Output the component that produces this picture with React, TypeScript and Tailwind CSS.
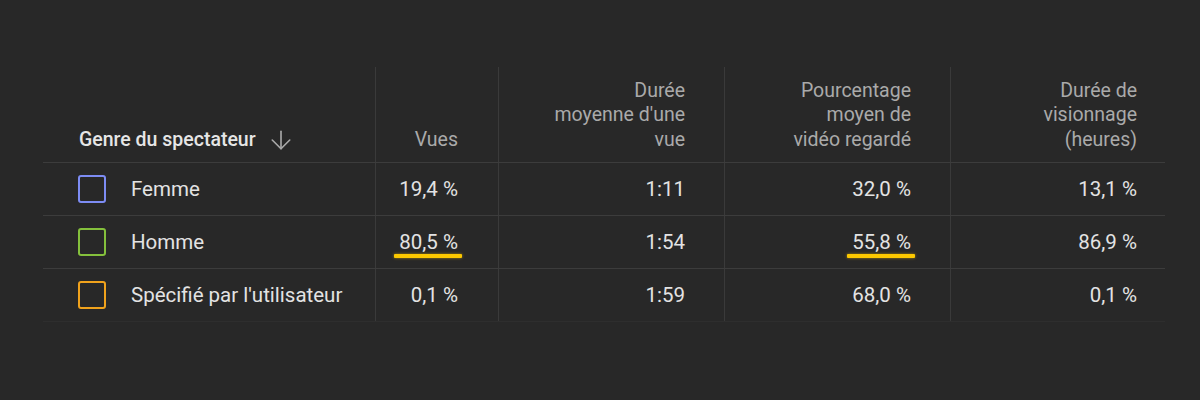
import React from 'react';
import { ArrowDown } from 'lucide-react';

type Row = {
  label: string;
  color: string;
  views: string;
  avgDuration: string;
  avgPercent: string;
  watchTime: string;
  markViews?: boolean;
  markPercent?: boolean;
};

const rows: Row[] = [
  { label: 'Femme', color: 'border-[#7d8cf4]', views: '19,4 %', avgDuration: '1:11', avgPercent: '32,0 %', watchTime: '13,1 %' },
  { label: 'Homme', color: 'border-[#84c03c]', views: '80,5 %', avgDuration: '1:54', avgPercent: '55,8 %', watchTime: '86,9 %', markViews: true, markPercent: true },
  { label: "Spécifié par l'utilisateur", color: 'border-[#f0a21c]', views: '0,1 %', avgDuration: '1:59', avgPercent: '68,0 %', watchTime: '0,1 %' },
];

const cols = 'grid grid-cols-[333px_123px_226px_226px_214px]';

function Marked({ text, on }: { text: string; on?: boolean }) {
  if (!on) return <span>{text}</span>;
  return (
    <span className="relative">
      {text}
      <span className="absolute left-[-5px] right-[-4px] top-[27px] h-[4.5px] rounded-[1px] bg-[#fcc800] shadow-[0_0_3px_rgba(252,200,0,0.6)]" />
    </span>
  );
}

export default function App() {
  return (
    <div
      className="w-[1200px] h-[400px] bg-[#282828] pt-[67px] pl-[43px]"
      style={{ fontFamily: 'Roboto, "Liberation Sans", sans-serif' }}
    >
      <div className="w-[1122px]">
        {/* Header */}
        <div className={`${cols} h-[96px] border-b border-[#3c3c3c] text-[19.5px] leading-[24.5px] text-[#aaaaaa]`}>
          <div className="flex items-end pl-[36px] pb-[10px] border-r border-[#3a3a3a]">
            <div className="flex items-center">
              <span className="font-medium text-[#e6e6e6]">Genre du spectateur</span>
              <ArrowDown className="ml-[10px] w-[30px] h-[30px] -my-[3px] text-[#aaaaaa]" strokeWidth={1.3} />
            </div>
          </div>
          <div className="flex items-end justify-end text-right pr-[40px] pb-[10px] border-r border-[#3a3a3a]">
            Vues
          </div>
          <div className="flex items-end justify-end text-right pr-[39px] pb-[10px] border-r border-[#3a3a3a]">
            <span>Durée<br />moyenne d'une<br />vue</span>
          </div>
          <div className="flex items-end justify-end text-right pr-[39px] pb-[10px] border-r border-[#3a3a3a]">
            <span>Pourcentage<br />moyen de<br />vidéo regardé</span>
          </div>
          <div className="flex items-end justify-end text-right pr-[28px] pb-[10px]">
            <span>Durée de<br />visionnage<br />(heures)</span>
          </div>
        </div>

        {/* Body */}
        {rows.map((r, i) => (
          <div
            key={r.label}
            className={`${cols} h-[53px] text-[20.5px] text-[#e3e3e3] ${i < rows.length - 1 ? 'border-b border-[#3c3c3c]' : 'border-b border-[#2e2e2e]'}`}
          >
            <div className="flex items-center pl-[35px] border-r border-[#3a3a3a]">
              <span className={`w-[28px] h-[28px] border-2 rounded-[3px] ${r.color}`} />
              <span className="ml-[25px]">{r.label}</span>
            </div>
            <div className="flex items-center justify-end pr-[40px] border-r border-[#3a3a3a]">
              <Marked text={r.views} on={r.markViews} />
            </div>
            <div className="flex items-center justify-end pr-[39px] border-r border-[#3a3a3a]">
              {r.avgDuration}
            </div>
            <div className="flex items-center justify-end pr-[39px] border-r border-[#3a3a3a]">
              <Marked text={r.avgPercent} on={r.markPercent} />
            </div>
            <div className="flex items-center justify-end pr-[28px]">{r.watchTime}</div>
          </div>
        ))}
      </div>
    </div>
  );
}
